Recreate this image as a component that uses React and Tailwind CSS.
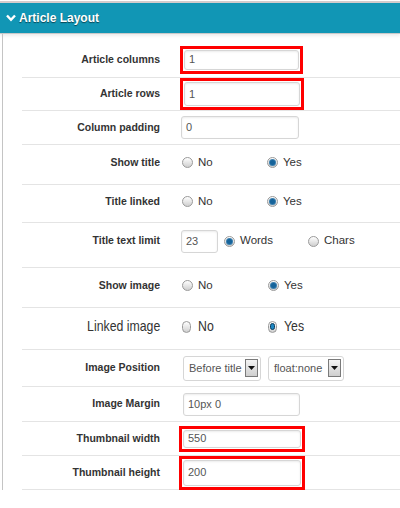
function Chevron() {
  return (
    <svg width="10" height="8" viewBox="0 0 10 8" className="mr-[3px]">
      <path d="M1 1.5 L5 5.8 L9 1.5" fill="none" stroke="white" strokeWidth="2.4" />
    </svg>
  );
}

function Radio({ checked, narrow }) {
  return (
    <span
      className={
        narrow
          ? "relative inline-flex h-[12px] w-[9px] items-center justify-center rounded-full border border-[#9a9a9a] bg-gradient-to-b from-white to-[#d0d0d0]"
          : "relative inline-flex h-[11px] w-[11px] items-center justify-center rounded-full border border-[#9a9a9a] bg-gradient-to-b from-white to-[#cfcfcf]"
      }
    >
      {checked ? (
        <span
          className={
            narrow
              ? "h-[7px] w-[5px] rounded-full border border-[#0c3c5c] bg-[#1c86c2]"
              : "h-[5px] w-[5px] rounded-full bg-[#15639a] shadow-[0_0_0_1px_#3b7fae]"
          }
        />
      ) : null}
    </span>
  );
}

function Option({ checked, label, className, narrow }) {
  return (
    <div className={"flex items-center " + (className || "")}>
      <Radio checked={checked} narrow={narrow} />
      <span
        className={
          narrow
            ? "ml-[7px] inline-block origin-left scale-x-[0.82] text-[15px] text-[#333]"
            : "ml-[5px] text-[11.5px] text-[#333]"
        }
      >
        {label}
      </span>
    </div>
  );
}

function Field({ value, className }) {
  return (
    <div
      className={
        "flex items-center rounded-[3px] border border-[#d6d6d6] bg-white pl-[4px] text-[11px] text-[#555] shadow-[inset_0_1px_2px_rgba(0,0,0,0.08)] " +
        (className || "")
      }
    >
      {value}
    </div>
  );
}

function RedBox({ value, className }) {
  return (
    <div className={"flex border-[3px] border-[#ff0000] p-[1px] " + className}>
      <Field value={value} className="flex-1" />
    </div>
  );
}

function Select({ value, className }) {
  return (
    <div
      className={
        "flex items-center justify-between rounded-[3px] border border-[#d6d6d6] bg-white pl-[5px] pr-[2px] text-[11px] text-[#555] " +
        className
      }
    >
      <span>{value}</span>
      <span className="flex h-[18px] w-[13px] items-center justify-center border border-[#7a7a7a] bg-gradient-to-b from-[#f4f4f4] to-[#cfcfcf]">
        <svg width="7" height="4" viewBox="0 0 7 4">
          <path d="M0 0 H7 L3.5 4 Z" fill="#111" />
        </svg>
      </span>
    </div>
  );
}

function Row({ label, className, labelClass, children }) {
  return (
    <div className={"ml-[19px] flex items-center border-b border-[#e4e4e4] " + className}>
      <div
        className={
          "w-[138px] shrink-0 text-right " +
          (labelClass || "text-[10.5px] font-bold text-[#333]")
        }
      >
        {label}
      </div>
      <div className="ml-[20px] flex items-center">{children}</div>
    </div>
  );
}

export default function App() {
  return (
    <div className="h-[508px] w-[400px] overflow-hidden bg-white pt-[1px] font-['Liberation_Sans',Arial,sans-serif]">
      <div className="flex h-[33px] items-center border-t-2 border-b border-t-[#d3cccc] border-b-[#c9c9c9] bg-[#1196b5] pl-[6px] text-[12px] font-bold text-white shadow-[0_2px_3px_rgba(0,0,0,0.08)] [text-shadow:0_1px_1px_rgba(0,0,0,0.55)]">
        <Chevron />
        Article Layout
      </div>

      <div className="ml-[2px] w-[398px] border-l border-[#c4c4c4]">
        <Row label="Article columns" className="h-[44px] pt-[8px]">
          <RedBox value="1" className="h-[28px] w-[123px]" />
        </Row>
        <Row label="Article rows" className="h-[33px]">
          <RedBox value="1" className="h-[32px] w-[124px]" />
        </Row>
        <Row label="Column padding" className="h-[34px]">
          <Field value="0" className="ml-[1px] h-[23px] w-[118px]" />
        </Row>
        <Row label="Show title" className="h-[40px] pb-[4px]">
          <Option label="No" className="ml-[2px] w-[85px]" />
          <Option label="Yes" checked />
        </Row>
        <Row label="Title linked" className="h-[38px] pb-[4px]">
          <Option label="No" className="ml-[2px] w-[85px]" />
          <Option label="Yes" checked />
        </Row>
        <Row label="Title text limit" className="h-[45px] pb-[8px]">
          <Field value="23" className="ml-[1px] h-[23px] w-[37px]" />
          <Option label="Words" checked className="ml-[6px] w-[84px]" />
          <Option label="Chars" />
        </Row>
        <Row label="Show image" className="h-[40px] pb-[4px]">
          <Option label="No" className="ml-[2px] w-[86px]" />
          <Option label="Yes" checked />
        </Row>
        <Row
          label={<span className="inline-block origin-right scale-x-[0.82]">Linked image</span>}
          labelClass="text-[15px] text-[#333]"
          className="h-[42px] pb-[4px]"
        >
          <Option label="No" narrow className="ml-[2px] w-[86px]" />
          <Option label="Yes" checked narrow />
        </Row>
        <Row label="Image Position" className="h-[37px]">
          <Select value="Before title" className="ml-[3px] h-[25px] w-[78px]" />
          <Select value="float:none" className="ml-[7px] h-[25px] w-[76px]" />
        </Row>
        <Row label="Image Margin" className="h-[35px]">
          <Field value="10px 0" className="ml-[3px] h-[23px] w-[117px]" />
        </Row>
        <Row label="Thumbnail width" className="h-[34px]">
          <RedBox value="550" className="-ml-[1px] h-[26px] w-[126px]" />
        </Row>
        <Row label="Thumbnail height" className="h-[34px]">
          <RedBox value="200" className="-ml-[1px] h-[34px] w-[126px]" />
        </Row>
      </div>
    </div>
  );
}
